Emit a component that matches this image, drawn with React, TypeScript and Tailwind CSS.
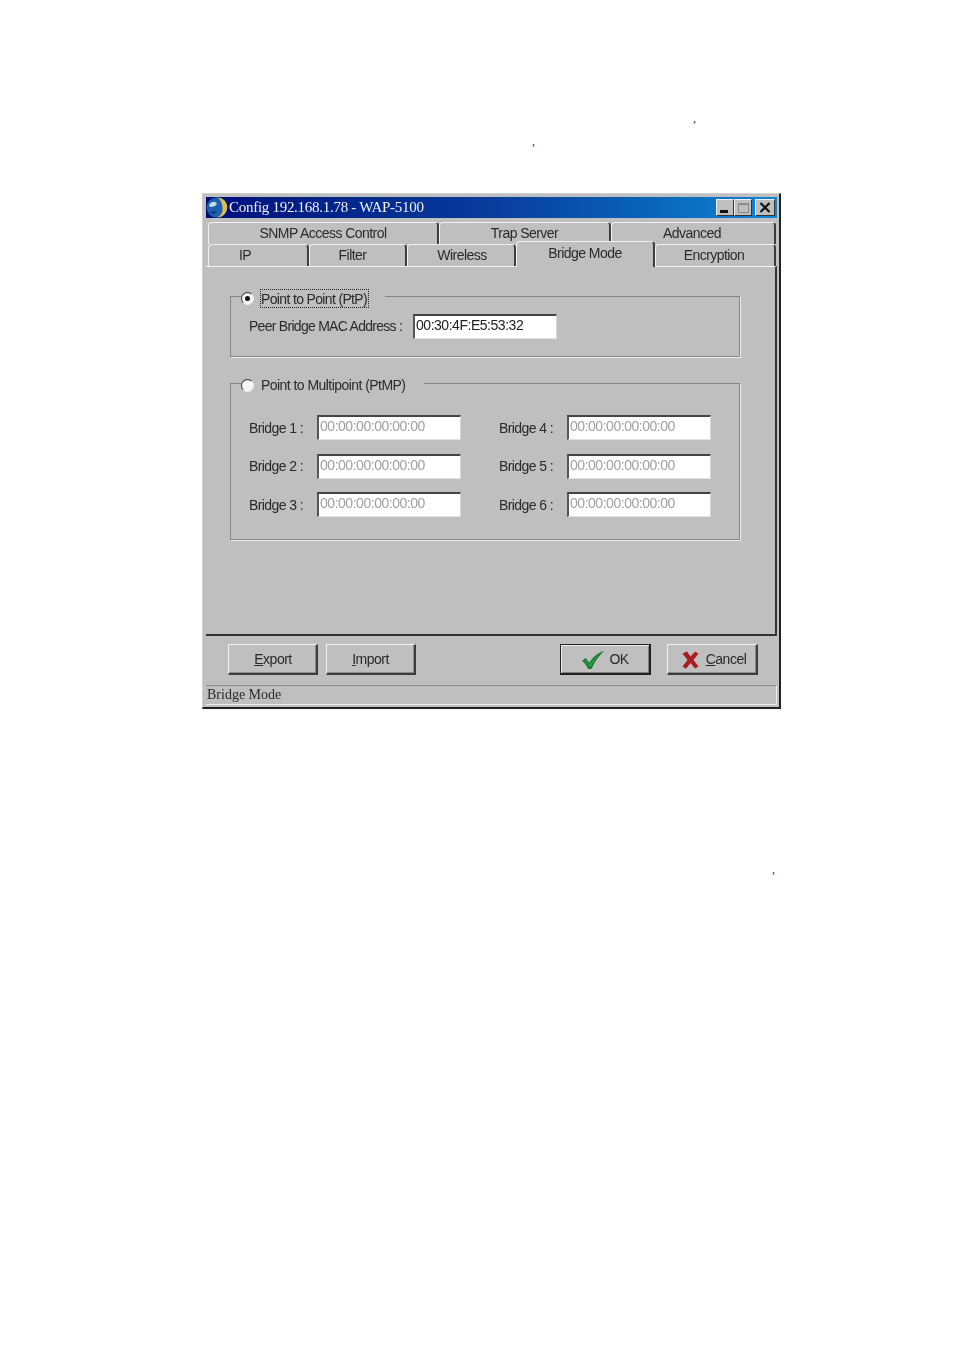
import React from "react";

const sans = "font-['Liberation_Sans',Arial,sans-serif]";
const serif = "font-['Liberation_Serif','Times_New_Roman',serif]";

const topTabs = [
  { label: "SNMP Access Control", width: "w-[231px]", shift: "" },
  { label: "Trap Server", width: "w-[172px]", shift: "" },
  { label: "Advanced", width: "w-[165px]", shift: "pr-[2px]" },
];

const bottomTabs = [
  { label: "IP", width: "w-[101px]", shift: "pr-[26px]" },
  { label: "Filter", width: "w-[98px]", shift: "pr-[10px]" },
  { label: "Wireless", width: "w-[109px]", shift: "pl-[2px]" },
  { label: "Bridge Mode", width: "w-[139px]", shift: "", active: true },
  { label: "Encryption", width: "w-[121px]", shift: "pr-[2px]" },
];

const bridges = [
  ["Bridge 1 :", "Bridge 4 :"],
  ["Bridge 2 :", "Bridge 5 :"],
  ["Bridge 3 :", "Bridge 6 :"],
];

const Tab = ({ label, width, shift, active }: { label: string; width: string; shift: string; active?: boolean }) => (
  <div
    className={`${width} ${shift} flex items-center justify-center rounded-t-[4px] border-t border-l border-r-2 border-t-[#f2f2f2] border-l-[#f2f2f2] border-r-[#3c3c3c] bg-[#bfbfbf] text-[14px] tracking-[-0.55px] text-[#2a2a2a] ${
      active ? "relative z-10 -mt-[3px] -mb-[1px] h-[26px] pb-[3px]" : "h-[22px]"
    }`}
  >
    {label}
  </div>
);

const Radio = ({ checked }: { checked?: boolean }) => (
  <span className="flex h-[13px] w-[13px] shrink-0 items-center justify-center rounded-full border border-t-[#333333] border-l-[#333333] border-r-[#eeeeee] border-b-[#eeeeee] bg-[#f4f4f4]">
    {checked && <span className="h-[5px] w-[5px] rounded-full bg-[#111111]" />}
  </span>
);

const MacInput = ({ value, disabled }: { value: string; disabled?: boolean }) => (
  <div
    className={`flex h-[25px] w-[144px] items-center border-t-2 border-l-2 border-r border-b border-t-[#444444] border-l-[#555555] border-r-[#d8d8d8] border-b-[#e2e2e2] bg-white pb-[3px] pl-[1px] text-[14px] tracking-[-0.47px] ${
      disabled ? "text-[#a0a0a0]" : "text-[#222222]"
    }`}
  >
    {value}
  </div>
);

const Button = ({ children, width, isDefault }: { children: React.ReactNode; width: string; isDefault?: boolean }) => (
  <div
    className={`${width} flex h-[31px] items-center justify-center gap-[5px] border-t border-l border-r-2 border-b-2 bg-[#bfbfbf] text-[14px] tracking-[-0.5px] text-[#2a2a2a] ${
      isDefault
        ? "border-t-[#222222] border-l-[#222222] border-r-[#222222] border-b-[#222222] shadow-[inset_1px_1px_0_#eeeeee,inset_-1px_-1px_0_#808080]"
        : "border-t-[#f2f2f2] border-l-[#f2f2f2] border-r-[#3c3c3c] border-b-[#3c3c3c] shadow-[inset_-1px_-1px_0_#8c8c8c]"
    }`}
  >
    {children}
  </div>
);

const CaptionButton = ({ children, className = "" }: { children: React.ReactNode; className?: string }) => (
  <div
    className={`relative flex h-[17px] w-[18px] items-center justify-center border-t border-l border-r border-b border-t-[#eeeeee] border-l-[#eeeeee] border-r-[#333333] border-b-[#333333] bg-[#bfbfbf] ${className}`}
  >
    {children}
  </div>
);

export default function App() {
  return (
    <div className={`h-[1349px] w-[954px] overflow-hidden bg-white ${sans}`}>
      <div className={`pt-[107px] ${serif} text-[12px] leading-[23px] text-[#333333]`}>
        <div className="h-[23px] pl-[693px]">,</div>
        <div className="h-[23px] pl-[532px]">,</div>
      </div>

      <div className="mt-[40px] ml-[202px] w-[579px] border-t border-l border-r-2 border-b-2 border-t-[#d0d0d0] border-l-[#d0d0d0] border-r-[#222222] border-b-[#222222] bg-[#bfbfbf] p-[3px] pr-[2px] pb-[2px] blur-[0.35px]">
        {/* title bar */}
        <div className="flex h-[21px] items-center bg-gradient-to-r from-[#000c7c] via-[#0a3c9c] to-[#1284d2]">
          <svg width="22" height="21" viewBox="0 0 22 21" className="shrink-0">
            <circle cx="11" cy="10.500" r="10.300" fill="#1c5fae" />
            <path d="M12 .4c5.400.6 9.400 4.800 9.200 10.400-.2 5-4.400 9.600-9.800 9.800 3.800-2.200 5.400-5.400 5.200-9.400C16.400 7 14.800 3 12 .4Z" fill="#e0bd4a" />
            <path d="M3 8c2-3 5-4 7-2.600 1.600 1.200 0 3.400-2.400 4C5.600 10 3.800 10.600 3 8Z" fill="#c4dcee" />
            <path d="M4 15.500c2-1.600 5-1.800 7-.6-1.600 2-5 2.400-7 .6Z" fill="#0e3a70" />
          </svg>
          <span className={`ml-[1px] ${serif} text-[15px] tracking-[-0.28px] whitespace-nowrap text-[#f0f0f0]`}>
            Config 192.168.1.78 - WAP-5100
          </span>
          <div className="ml-auto flex items-center pr-[2px]">
            <CaptionButton>
              <span className="absolute bottom-[2px] left-[3px] h-[3px] w-[8px] bg-[#111111]" />
            </CaptionButton>
            <CaptionButton>
              <span className="h-[10px] w-[11px] border border-t-2 border-[#8c8c8c]" />
            </CaptionButton>
            <CaptionButton className="ml-[3px] w-[20px]">
              <svg width="12" height="11" viewBox="0 0 12 11">
                <path d="M1.500 1l9 9M10.500 1l-9 9" stroke="#111111" strokeWidth="2.200" />
              </svg>
            </CaptionButton>
          </div>
        </div>

        {/* tabs */}
        <div className="mt-[4px] flex pl-[2px]">
          {topTabs.map((t) => (
            <Tab key={t.label} label={t.label} width={t.width} shift={t.shift} />
          ))}
        </div>
        <div className="flex pl-[2px]">
          {bottomTabs.map((t) => (
            <Tab key={t.label} label={t.label} width={t.width} shift={t.shift} active={t.active} />
          ))}
        </div>

        {/* tab page */}
        <div className="h-[370px] border-t border-r-2 border-b-2 border-t-[#f2f2f2] border-r-[#333333] border-b-[#333333] pt-[29px] pl-[24px]">
          <div className="h-[61px] w-[510px] border border-[#858585] shadow-[1px_1px_0_#ececec]">
            <div className="-mt-[11px] ml-[10px] flex h-[24px] w-[144px] items-center bg-[#bfbfbf] text-[14px] tracking-[-0.65px] text-[#2a2a2a]">
              <Radio checked />
              <span className="ml-[6px] border border-dotted border-[#222222] pt-[1px] pr-[1px] leading-[16px]">Point to Point (PtP)</span>
            </div>
            <div className="mt-[4px] flex items-center pl-[18px] text-[14px] tracking-[-0.72px] text-[#2a2a2a]">
              <span className="w-[164px]">Peer Bridge MAC Address :</span>
              <MacInput value="00:30:4F:E5:53:32" />
            </div>
          </div>

          <div className="mt-[26px] h-[157px] w-[510px] border border-[#858585] shadow-[1px_1px_0_#ececec]">
            <div className="-mt-[11px] ml-[10px] flex h-[24px] w-[183px] items-center bg-[#bfbfbf] pt-[1px] text-[14px] tracking-[-0.55px] text-[#2a2a2a]">
              <Radio />
              <span className="ml-[7px]">Point to Multipoint (PtMP)</span>
            </div>
            <div className="mt-[18px] flex flex-col gap-[14px] pl-[18px] text-[14px] tracking-[-0.6px] text-[#2a2a2a]">
              {bridges.map((row) => (
                <div key={row[0]} className="grid h-[24.500px] grid-cols-[250px_250px]">
                  {row.map((label) => (
                    <div key={label} className="flex items-center">
                      <span className="w-[68px] pt-[1px]">{label}</span>
                      <MacInput value="00:00:00:00:00:00" disabled />
                    </div>
                  ))}
                </div>
              ))}
            </div>
          </div>
        </div>

        {/* buttons */}
        <div className="flex gap-[8px] pt-[8px] pr-[19px] pl-[22px]">
          <Button width="w-[90px]">
            <span className="pl-[1px]">
              <u>E</u>xport
            </span>
          </Button>
          <Button width="w-[90px]">
            <span>
              <u>I</u>mport
            </span>
          </Button>
          <div className="ml-auto flex gap-[16px]">
            <Button width="w-[91px]" isDefault>
              <svg width="22" height="20" viewBox="0 0 22 19" className="mt-[2px] ml-[1px]">
                <path d="M0 10.500l3.500-3 4 4.800C10.500 7 15 2.500 22 .5c-5 4.500-9.500 10.500-12.500 18H6C4.800 15 2.500 12.500 0 10.500Z" fill="#1e7a34" />
                <path d="M2.500 10.500l1-.8 4.300 5C10.500 9.500 13.500 6.500 17 4.200c-3.200 3.200-6 7-8.800 12.300C6.800 14.200 4.800 12 2.500 10.500Z" fill="#34b04e" />
              </svg>
              <span className="pt-[1px]">OK</span>
            </Button>
            <Button width="w-[91px]">
              <svg width="17" height="18" viewBox="0 0 17 18" className="mt-[2px] mr-[2px] ml-[4px]">
                <path d="M.500 2.500L5 .500l3.500 5L13 .800l3.500 1.700-5 6.500 5 6.500L13 17.500 8.500 12 4 17.800.500 15.500 5.500 9 .500 2.500Z" fill="#a81c22" />
              </svg>
              <span className="pt-[1px]">
                <u>C</u>ancel
              </span>
            </Button>
          </div>
        </div>

        {/* status bar */}
        <div className={`mt-[10px] flex h-[20px] items-center border-t border-r border-b border-t-[#8a8a8a] border-r-[#eeeeee] border-b-[#eeeeee] pb-[2px] pl-[1px] ${serif} text-[14px] text-[#2a2a2a]`}>
          Bridge Mode
        </div>
      </div>

      <div className={`mt-[149px] h-[23px] pl-[772px] ${serif} text-[12px] leading-[23px] text-[#333333]`}>,</div>
    </div>
  );
}
